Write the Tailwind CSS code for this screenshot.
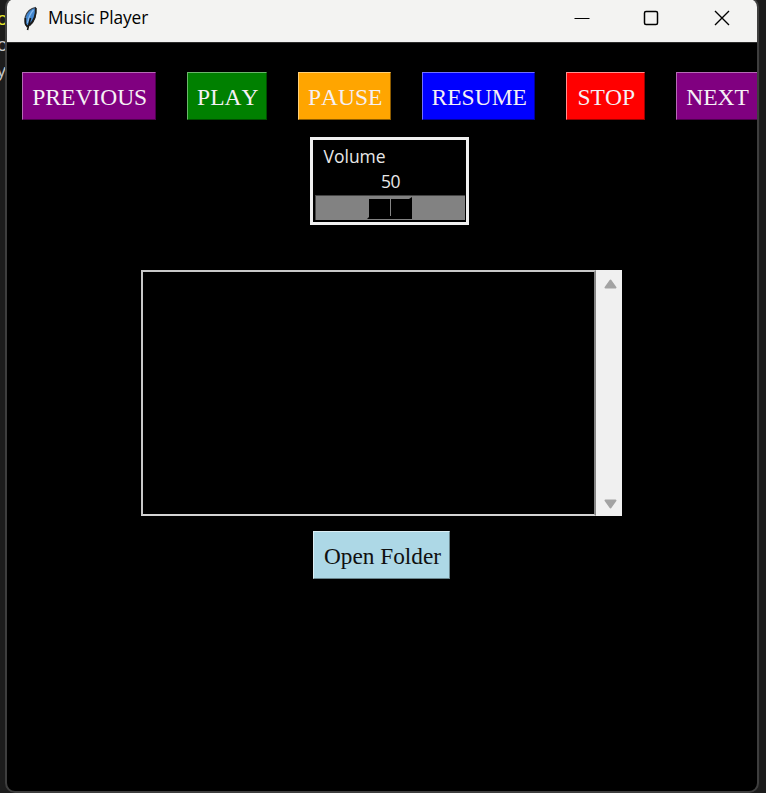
<!DOCTYPE html>
<html lang="en">
<head>
<meta charset="utf-8">
<title>Music Player</title>
<script src="https://cdn.jsdelivr.net/npm/@tailwindcss/browser@4"></script>
</head>
<body class="relative w-[766px] h-[793px] overflow-hidden bg-[#1c1c1c] font-['Open_Sans','Noto_Sans',sans-serif]">
<!-- editor text showing behind the window -->
<div class="absolute left-[-3px] top-[5px] text-[18px] leading-[26px] text-[#c8c8c8]">
  <div class="text-[#e3e32c]">o</div><div>o</div><div>y</div>
</div>
<main class="absolute left-[5px] top-[-3px] w-[754px] h-[796px] rounded-[10px] border-2 border-[#3e3e3e] bg-black overflow-hidden flex flex-col items-start">
  <header class="w-full h-[44px] shrink-0 bg-[#f3f3f2] border-b border-[#2b2b2b] flex items-center">
    <svg class="ml-[15px] mt-[-5px] shrink-0" width="16" height="26" viewBox="0 0 16 26">
      <path d="M13.500 2.500C9 3 4.500 7 3.300 12C2.600 15 2.700 18 4.200 20.500L7.500 20.500C12 17 14.500 11 13.500 2.500Z" fill="#4186d0" stroke="#3c4148" stroke-width="1.200"/>
      <path d="M11.500 5C8.500 8 6.600 13 5.500 18" fill="none" stroke="#86b9ee" stroke-width="1.300"/>
      <path d="M13.800 3C14.300 10 12 16 7.500 20" fill="none" stroke="#1c1c1c" stroke-width="1.900"/>
      <path d="M3.400 13L3.500 19L5.500 22M8.500 13L5.500 25" fill="none" stroke="#161616" stroke-width="1.600"/>
    </svg>
    <h1 class="ml-[10px] mt-[-5px] text-[17.300px] leading-[24px] text-black whitespace-nowrap tracking-[-0.1px]">Music Player</h1>
    <div class="ml-auto mr-[27px] mt-[-5px] flex items-center">
      <svg class="mr-[53px]" width="16" height="16" viewBox="0 0 16 16"><path d="M.5 8.500h15" stroke="#000" stroke-width="1"/></svg>
      <svg class="mr-[55px]" width="16" height="16" viewBox="0 0 16 16"><rect x="1.500" y="1.500" width="13" height="13" rx="1.500" fill="none" stroke="#000" stroke-width="1.500"/></svg>
      <svg width="16" height="16" viewBox="0 0 16 16"><path d="M1 1L15 15M15 1L1 15" stroke="#000" stroke-width="1.400"/></svg>
    </div>
  </header>
  <div class="mt-[29px] ml-[15px] flex gap-[31px] shrink-0 font-['Liberation_Serif',serif] text-[23.500px] leading-[48px] text-[#f5f0f5] [font-kerning:none]">
    <button class="w-[134px] h-[48px] shrink-0 pl-[1.500px] bg-[#800080] border border-t-[#b56bb5] border-l-[#b56bb5] border-r-[#4d004d] border-b-[#4d004d] whitespace-nowrap">PREVIOUS</button>
    <button class="w-[80px] h-[48px] shrink-0 pl-[1.500px] bg-[#008000] border border-t-[#6bb56b] border-l-[#6bb56b] border-r-[#004d00] border-b-[#004d00] whitespace-nowrap">PLAY</button>
    <button class="w-[93px] h-[48px] shrink-0 pl-[1.500px] bg-[#ffa500] border border-t-[#ffd078] border-l-[#ffd078] border-r-[#8c5b00] border-b-[#8c5b00] whitespace-nowrap">PAUSE</button>
    <button class="w-[113px] h-[48px] shrink-0 pl-[1.500px] bg-[#0000ff] border border-t-[#7070ff] border-l-[#7070ff] border-r-[#000099] border-b-[#000099] whitespace-nowrap">RESUME</button>
    <button class="w-[79px] h-[48px] shrink-0 pl-[1.500px] bg-[#ff0000] border border-t-[#ff9090] border-l-[#ff9090] border-r-[#990000] border-b-[#990000] whitespace-nowrap">STOP</button>
    <button class="w-[83px] h-[48px] shrink-0 bg-[#800080] border border-t-[#b56bb5] border-l-[#b56bb5] border-r-[#4d004d] border-b-[#4d004d] whitespace-nowrap">NEXT</button>
  </div>
  <section class="mt-[17px] ml-[303px] w-[159px] h-[88px] shrink-0 border-[3px] border-[#f0f0f0] p-[2px] flex flex-col text-[17.500px] text-[#e8e8e8]">
    <div class="pl-[8.500px] mt-[2px] leading-[24px] h-[24px]">Volume</div>
    <div class="h-[27px] leading-[26px] text-center pl-[2px] tracking-[-0.5px]">50</div>
    <div class="h-[25px] w-[150px] bg-[#828282] border-t border-l border-[#444] flex">
      <svg class="ml-[51px]" width="47" height="24" viewBox="0 0 47 24"><path d="M0 23L2 21V3H42L45 1V23Z" fill="#000"/><path d="M23.500 2V20" stroke="#858585" stroke-width="1"/></svg>
    </div>
  </section>
  <section class="mt-[45px] ml-[134px] w-[481px] h-[246px] shrink-0 flex">
    <div class="w-[455px] h-full border-2 border-t-[#c8c8c8] border-l-[#c8c8c8] border-b-[#d5d5d5] border-r-[#858585]"></div>
    <div class="w-[26px] h-full bg-[#f0f0f0] flex flex-col items-center justify-between pl-[2px] pt-[9px] pb-[7px]">
      <svg width="13" height="10" viewBox="0 0 13 10"><path d="M6.500 1.500L11.500 8.500H1.500Z" fill="#a3a3a3" stroke="#a3a3a3" stroke-width="2" stroke-linejoin="round"/></svg>
      <svg width="13" height="10" viewBox="0 0 13 10"><path d="M6.500 8.500L11.500 1.500H1.500Z" fill="#a3a3a3" stroke="#a3a3a3" stroke-width="2" stroke-linejoin="round"/></svg>
    </div>
  </section>
  <button class="mt-[15px] ml-[306px] w-[137px] h-[48px] shrink-0 pl-[2px] bg-[#add8e6] border border-t-[#dceff5] border-l-[#dceff5] border-r-[#6a858d] border-b-[#6a858d] font-['Liberation_Serif',serif] text-[23.300px] leading-[48px] text-[#101010] whitespace-nowrap [font-kerning:none]">Open Folder</button>
</main>
</body>
</html>
